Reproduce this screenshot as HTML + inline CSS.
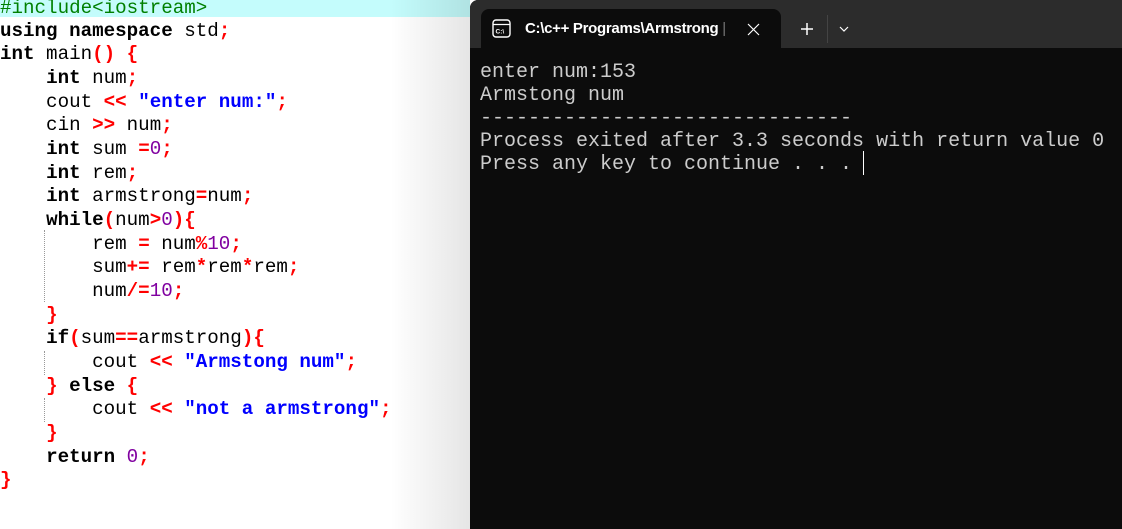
<!DOCTYPE html>
<html><head><style>
*{margin:0;padding:0;box-sizing:border-box}
body{width:1122px;height:529px;overflow:hidden;background:#fff;position:relative;font-family:"Liberation Mono",monospace}
.ed{position:absolute;left:0;top:0;width:470px;height:529px;background:#fff}
.hl{position:absolute;left:0;top:0;width:470px;height:17px;background:#c4fcfc}
.shadow{position:absolute;left:390px;top:0;width:80px;height:529px;background:linear-gradient(to right,rgba(0,0,0,0),rgba(0,0,0,0.1))}
.ln{position:absolute;left:0;font-size:19.2px;line-height:20px;white-space:pre;color:#000}
b{font-weight:bold}
.r{color:#ff0000;font-weight:bold}
.s{color:#0000ff;font-weight:bold}
.n{color:#8000a0}
.g{color:#008000}
.guide{position:absolute;left:44px;width:0;border-left:1px dotted #999}
.term{position:absolute;left:470px;top:0;width:652px;height:529px;background:#0c0c0c;border-top-left-radius:8px;overflow:hidden}
.bar{position:absolute;left:0;top:0;width:652px;height:48px;background:#2c2c2c}
.tab{position:absolute;left:11px;top:9px;width:300px;height:40px;background:#0c0c0c;border-radius:8px 8px 0 0}
.tt{position:absolute;left:44px;top:11px;color:#fff;font-family:"Liberation Sans",sans-serif;font-size:15px;font-weight:bold;letter-spacing:-0.3px}
.out{position:absolute;left:10px;top:61px;color:#cccccc;font-size:20px;line-height:23px;white-space:pre}
</style></head><body>
<div class="ed">
<div class="hl"></div>
<div class="ln g" style="top:-2px">#include&lt;iostream&gt;</div>
<div class="ln" style="top:21px"><b>using namespace</b> std<span class="r">;</span></div>
<div class="ln" style="top:44px"><b>int</b> main<span class="r">() {</span></div>
<div class="ln" style="top:68px">    <b>int</b> num<span class="r">;</span></div>
<div class="ln" style="top:92px">    cout <span class="r">&lt;&lt;</span> <span class="s">"enter num:"</span><span class="r">;</span></div>
<div class="ln" style="top:115px">    cin <span class="r">&gt;&gt;</span> num<span class="r">;</span></div>
<div class="ln" style="top:139px">    <b>int</b> sum <span class="r">=</span><span class="n">0</span><span class="r">;</span></div>
<div class="ln" style="top:163px">    <b>int</b> rem<span class="r">;</span></div>
<div class="ln" style="top:186px">    <b>int</b> armstrong<span class="r">=</span>num<span class="r">;</span></div>
<div class="ln" style="top:210px">    <b>while</b><span class="r">(</span>num<span class="r">&gt;</span><span class="n">0</span><span class="r">){</span></div>
<div class="ln" style="top:234px">        rem <span class="r">=</span> num<span class="r">%</span><span class="n">10</span><span class="r">;</span></div>
<div class="ln" style="top:257px">        sum<span class="r">+=</span> rem<span class="r">*</span>rem<span class="r">*</span>rem<span class="r">;</span></div>
<div class="ln" style="top:281px">        num<span class="r">/=</span><span class="n">10</span><span class="r">;</span></div>
<div class="ln" style="top:305px">    <span class="r">}</span></div>
<div class="ln" style="top:328px">    <b>if</b><span class="r">(</span>sum<span class="r">==</span>armstrong<span class="r">){</span></div>
<div class="ln" style="top:352px">        cout <span class="r">&lt;&lt;</span> <span class="s">"Armstong num"</span><span class="r">;</span></div>
<div class="ln" style="top:376px">    <span class="r">}</span> <b>else</b> <span class="r">{</span></div>
<div class="ln" style="top:399px">        cout <span class="r">&lt;&lt;</span> <span class="s">"not a armstrong"</span><span class="r">;</span></div>
<div class="ln" style="top:423px">    <span class="r">}</span></div>
<div class="ln" style="top:447px">    <b>return</b> <span class="n">0</span><span class="r">;</span></div>
<div class="ln" style="top:470px"><span class="r">}</span></div>
<div class="guide" style="top:230px;height:72px"></div>
<div class="guide" style="top:351px;height:24px"></div>
<div class="guide" style="top:398px;height:24px"></div>
<div class="shadow"></div>
</div>
<div class="term">
<div class="bar"></div>
<div class="tab">
<svg style="position:absolute;left:11px;top:10px" width="19" height="19" viewBox="0 0 19 19"><rect x="1" y="1" width="17" height="17" rx="3" fill="none" stroke="#fff" stroke-width="1.4"/><line x1="1" y1="5.5" x2="18" y2="5.5" stroke="#fff" stroke-width="1.2"/><text x="3.5" y="14.5" font-size="6.5" fill="#fff" font-family="Liberation Sans" font-weight="bold">C:\</text></svg>
<div class="tt">C:\c++ Programs\Armstrong <span style="color:#777;font-weight:normal">|</span></div>
<svg style="position:absolute;left:266px;top:14px" width="13" height="13" viewBox="0 0 13 13"><path d="M1 1L12 12M12 1L1 12" stroke="#fff" stroke-width="1.2"/></svg>
</div>
<svg style="position:absolute;left:330px;top:22px" width="14" height="14" viewBox="0 0 14 14"><path d="M7 1V13M1 7H13" stroke="#fff" stroke-width="1.5"/></svg>
<div style="position:absolute;left:357px;top:15px;width:1px;height:28px;background:#444"></div>
<svg style="position:absolute;left:369px;top:26px" width="10" height="6" viewBox="0 0 10 6"><path d="M1 1L5 5L9 1" stroke="#fff" stroke-width="1.2" fill="none"/></svg>
<div class="out">enter num:153
Armstong num
-------------------------------
Process exited after 3.3 seconds with return value 0
Press any key to continue . . . </div>
<div style="position:absolute;left:393px;top:151px;width:1px;height:24px;background:#fff"></div>
</div>
</body></html>
